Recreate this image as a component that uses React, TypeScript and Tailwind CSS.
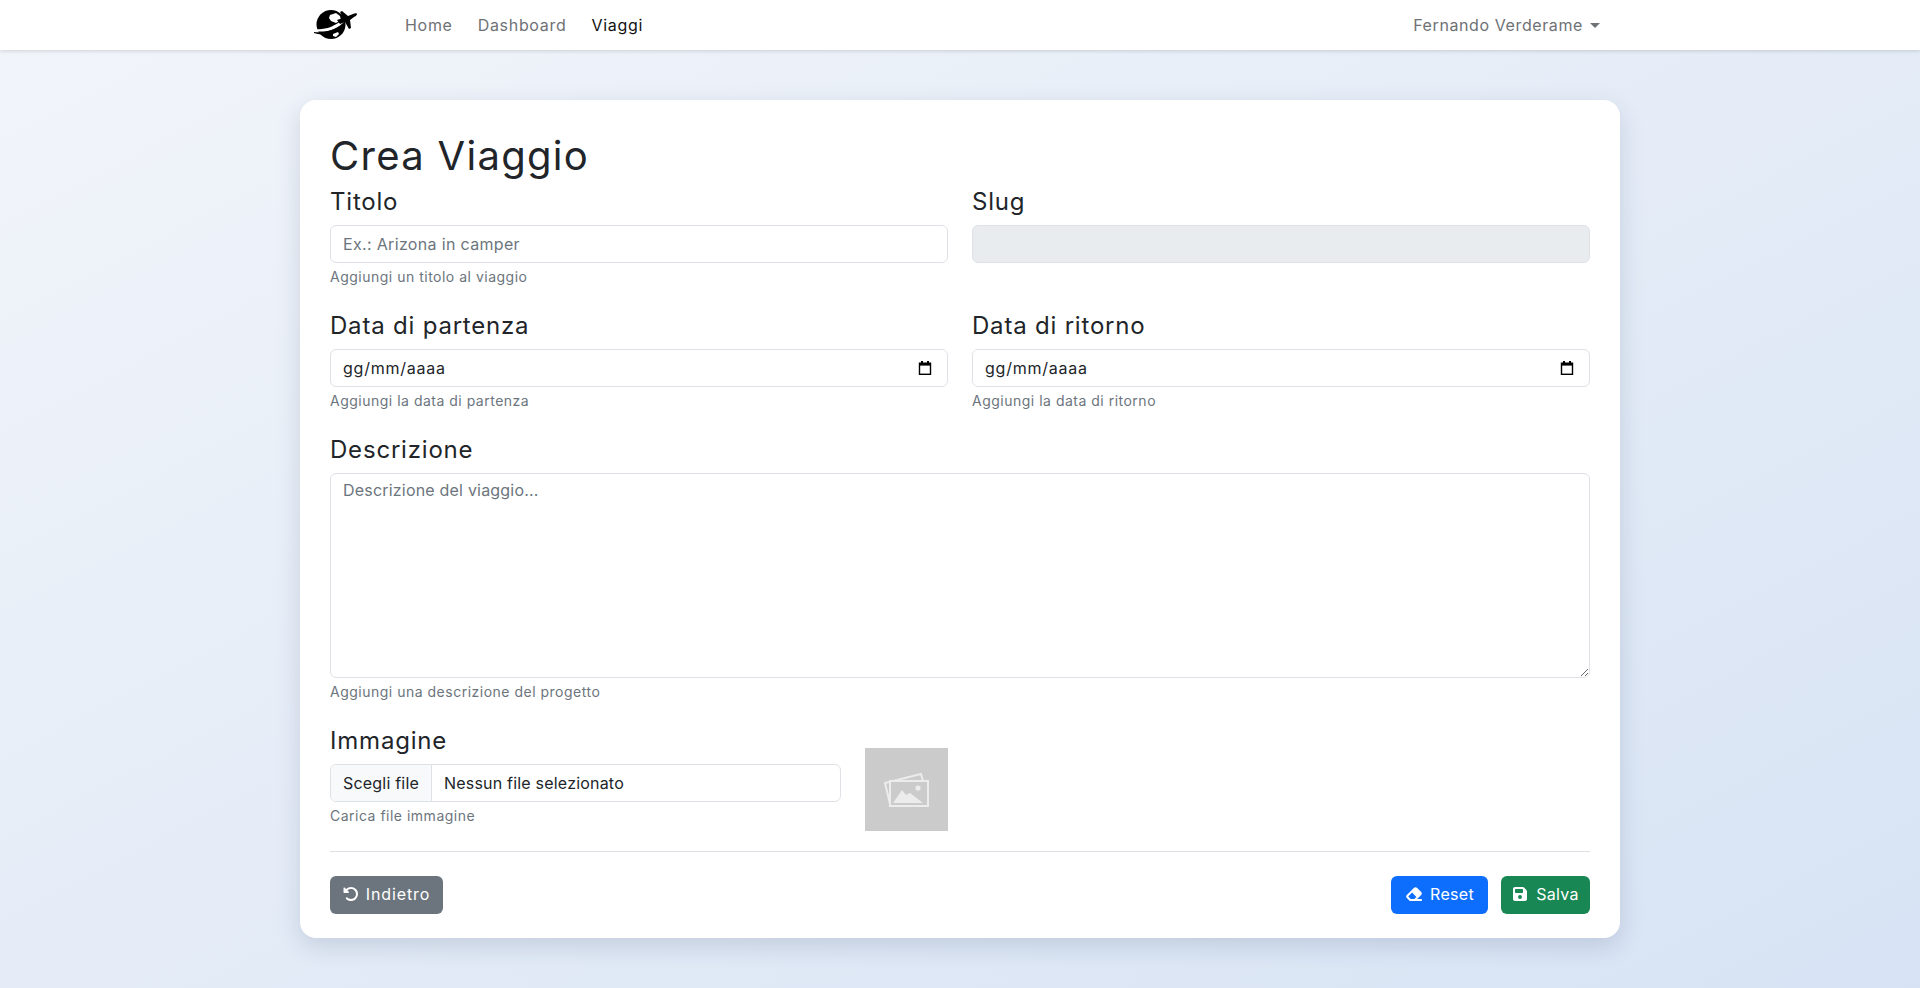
import React from 'react';
import { FaRotateLeft, FaEraser, FaFloppyDisk } from 'react-icons/fa6';

const labelCls = 'block text-[24px] leading-[38px] tracking-[0.8px] text-[#212529] mb-[4px]';
const helpCls = 'mt-[3px] mb-[1px] text-[14px] leading-[21px] text-[#6c757d] tracking-[0.5px]';

function Logo() {
  return (
    <svg width="44" height="32" viewBox="0 0 44 32" className="block">
      <circle cx="18" cy="16.5" r="14.5" fill="#000" />
      {/* continents */}
      <path d="M17 7l6-2 4 3 1 4-5 3-5-2-2-3z" fill="#fff" />
      <path d="M20 26l5-2 1 2-3 3-3-1z" fill="#fff" />
      {/* swoosh */}
      <path d="M3 21c8 1 18-2 26-9l3 1C24 22 12 25 3 23z" fill="#fff" />
      <path d="M1 24c9 1 20-1 29-8l1 1C22 26 9 28 1 25z" fill="#000" />
      {/* plane */}
      <path d="M24 12l6-2-3-6 2-1 6 5 5-2c2-1 4-1 4 0s-1 2-3 3l-4 3 1 8-2 1-4-7-5 2z" fill="#000" />
    </svg>
  );
}

function CalendarIcon() {
  return (
    <svg width="14" height="14" viewBox="0 0 14 14" className="block">
      <path d="M3 0h2v1.5h4V0h2v1.5h2.2V14H.8V1.5H3z" fill="#000" />
      <rect x="2.2" y="4.6" width="9.6" height="8" fill="#fff" />
    </svg>
  );
}

function ImagesIcon() {
  return (
    <svg width="45" height="34" viewBox="0 0 45 34" fill="none" className="block">
      <path d="M6 31 1 10 37 1l2 7" stroke="#ececec" strokeWidth="2" />
      <rect x="6" y="8" width="38" height="25" fill="#cbcbcb" stroke="#ececec" strokeWidth="2" />
      <circle cx="34" cy="15" r="2.6" fill="#ececec" />
      <path d="M9 30 18 17l4 5 4-2 13 10z" fill="#ececec" />
    </svg>
  );
}

function Field({ label, help, children }: { label: string; help: string; children: React.ReactNode }) {
  return (
    <div>
      <label className={labelCls}>{label}</label>
      {children}
      <div className={helpCls}>{help}</div>
    </div>
  );
}

function DateField({ label, help }: { label: string; help: string }) {
  return (
    <Field label={label} help={help}>
      <div className="flex h-[38px] items-center justify-between rounded-[6px] border border-[#dee2e6] bg-white pl-[12px] pr-[15px] text-[16px] leading-[34px] tracking-[0.75px] text-[#212529]">
        <span className="-mt-[1px]">gg/mm/aaaa</span>
        <CalendarIcon />
      </div>
    </Field>
  );
}

export default function App() {
  return (
    <div
      className="h-[988px] overflow-hidden bg-gradient-to-br from-[#f2f5fa] to-[#d7e3f4] text-[#212529]"
      style={{ fontFamily: 'Inter, "Noto Sans", sans-serif' }}
    >
      {/* Navbar */}
      <nav className="h-[50px] bg-white shadow-[0_1px_4px_rgba(0,0,0,0.15)]">
        <div className="mx-auto flex h-full w-[1320px] items-center justify-between px-[12px]">
          <div className="flex items-center">
            <div className="-mt-[2px] ml-[1px] w-[92px]">
              <Logo />
            </div>
            <div className="-mt-[1px] flex gap-[25px] text-[16px] tracking-[0.7px] text-[#6e7175]">
              <a>Home</a>
              <a>Dashboard</a>
              <a className="text-[#111]">Viaggi</a>
            </div>
          </div>
          <div className="-mt-[1px] flex items-center gap-[7px] pr-[8px] text-[16px] tracking-[0.6px] text-[#6e7175]">
            <span>Fernando Verderame</span>
            <span className="mt-[1px] h-0 w-0 border-x-[5px] border-t-[5px] border-x-transparent border-t-[#6e7175]" />
          </div>
        </div>
      </nav>

      {/* Card */}
      <main className="mx-auto mt-[50px] h-[838px] w-[1320px] rounded-[16px] bg-white px-[30px] pt-[30px] shadow-[0_8px_24px_rgba(30,50,90,0.15)]">
        <h1 className="mb-[5px] pt-[3px] text-[40px] leading-[45px] tracking-[1.3px] text-[#212529]">Crea Viaggio</h1>

        <div className="grid grid-cols-2 gap-x-[24px] gap-y-[19px]">
          <Field label="Titolo" help="Aggiungi un titolo al viaggio">
            <input
              className="block h-[38px] w-full rounded-[6px] border border-[#dee2e6] bg-white px-[12px] text-[16px] tracking-[0.33px] text-[#212529] outline-none placeholder:text-[#6c757d]"
              placeholder="Ex.: Arizona in camper"
            />
          </Field>
          <Field label="Slug" help="">
            <div className="h-[38px] rounded-[6px] border border-[#dee2e6] bg-[#e9ecef]" />
          </Field>
          <DateField label="Data di partenza" help="Aggiungi la data di partenza" />
          <DateField label="Data di ritorno" help="Aggiungi la data di ritorno" />
          <div className="col-span-2">
            <Field label="Descrizione" help="Aggiungi una descrizione del progetto">
              <textarea
                className="block h-[205px] w-full rounded-[6px] border border-[#dee2e6] bg-white px-[12px] py-[4px] text-[16px] tracking-[0.2px] outline-none placeholder:text-[#6c757d]"
                placeholder="Descrizione del viaggio..."
              />
            </Field>
          </div>
          <div className="grid grid-cols-[511px_83px] gap-x-[24px]">
            <Field label="Immagine" help="Carica file immagine">
              <div className="flex h-[38px] items-center overflow-hidden rounded-[6px] border border-[#dee2e6] bg-white text-[16px] tracking-[0.2px]">
                <span className="flex h-full w-[101px] items-center justify-center border-r border-[#dee2e6] bg-[#f8f9fa]">
                  Scegli file
                </span>
                <span className="pl-[12px]">Nessun file selezionato</span>
              </div>
            </Field>
            <div className="mt-[26px] flex h-[83px] w-[83px] items-center justify-center bg-[#cbcbcb]">
              <ImagesIcon />
            </div>
          </div>
        </div>

        <hr className="mt-[20px] border-t border-[#dee2e6]" />

        <div className="mt-[24px] flex items-center justify-between">
          <button className="flex h-[38px] w-[113px] items-center justify-center gap-[7px] rounded-[6px] bg-[#6c757d] pb-[2px] text-[16px] tracking-[0.9px] text-white">
            <FaRotateLeft size={16} />
            Indietro
          </button>
          <div className="flex gap-[13px]">
            <button className="flex h-[38px] w-[97px] items-center justify-center gap-[7px] rounded-[6px] bg-[#0d6efd] pb-[2px] text-[16px] tracking-[0.3px] text-white">
              <FaEraser size={18} />
              Reset
            </button>
            <button className="flex h-[38px] w-[89px] items-center justify-center gap-[8px] rounded-[6px] bg-[#198754] pb-[2px] text-[16px] tracking-[0.3px] text-white">
              <FaFloppyDisk size={16} />
              Salva
            </button>
          </div>
        </div>
      </main>
    </div>
  );
}
